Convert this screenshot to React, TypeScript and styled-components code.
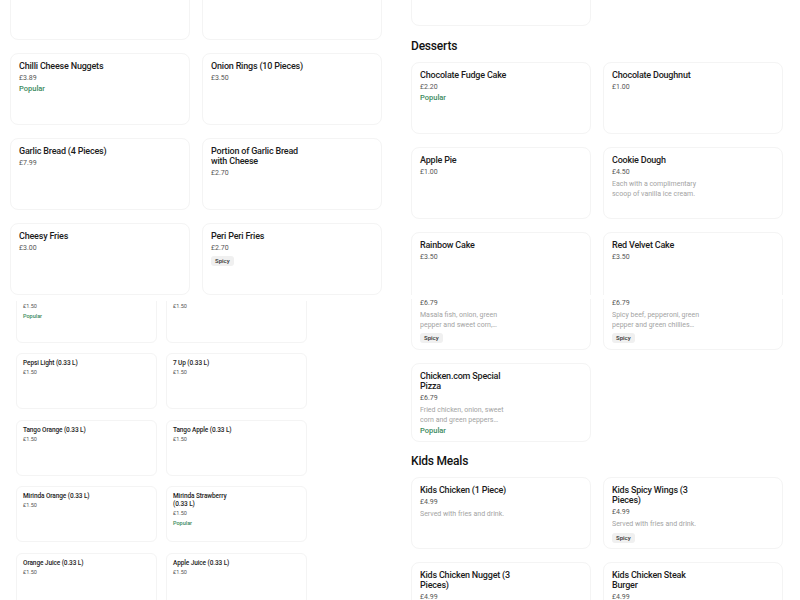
import React from 'react';
import styled, { createGlobalStyle } from 'styled-components';

interface Item {
    name: string;
    price: string;
    description?: string;
    popular?: boolean;
    spicy?: boolean;
}

const GlobalStyle = createGlobalStyle`
    html, body {
        margin: 0;
        padding: 0;
        background: #ffffff;
    }
    body {
        font-family: Roboto, "Noto Sans", "Liberation Sans", sans-serif;
        color: #1f1f1f;
        -webkit-font-smoothing: antialiased;
    }
`;

const Page = styled.div`
    width: 800px;
    height: 600px;
    overflow: hidden;
`;

const Band = styled.div<{ $height: number }>`
    display: grid;
    grid-template-columns: 400px 400px;
    height: ${(p) => p.$height}px;
    overflow: hidden;
`;

// a column of a band: it clips its own top edge, the list inside is pulled up
// so that only the lower part of its first row shows
const Column = styled.div<{ $left: number; $top: number; $shift: number }>`
    margin-top: ${(p) => p.$top}px;
    padding-left: ${(p) => p.$left}px;
    overflow: hidden;

    & > :first-child {
        margin-top: ${(p) => p.$shift}px;
    }
`;

const Inner = styled.div``;

const CardGrid = styled.div<{ $small?: boolean }>`
    display: grid;
    grid-template-columns: ${(p) => (p.$small ? '141px 141px' : '180px 180px')};
    column-gap: ${(p) => (p.$small ? 9 : 12)}px;
    row-gap: ${(p) => (p.$small ? 10.67 : 13)}px;
`;

const Card = styled.div<{ $small?: boolean }>`
    box-sizing: border-box;
    min-height: ${(p) => (p.$small ? 56 : 72)}px;
    padding: ${(p) => (p.$small ? '5px 6px 5px' : '7px 8px 5px')};
    border: 1px solid #f4f4f4;
    border-radius: ${(p) => (p.$small ? 6 : 8)}px;
    background: #ffffff;
    display: flex;
    flex-direction: column;
    align-items: flex-start;
`;

const Title = styled.div<{ $small?: boolean }>`
    max-width: ${(p) => (p.$small ? 68 : 95)}px;
    font-size: ${(p) => (p.$small ? 6.5 : 9)}px;
    line-height: ${(p) => (p.$small ? 8 : 10)}px;
    letter-spacing: ${(p) => (p.$small ? -0.1 : -0.2)}px;
    font-weight: 500;
    color: #1c1c1c;
`;

const Price = styled.div<{ $small?: boolean }>`
    margin-top: ${(p) => (p.$small ? 2 : 3)}px;
    font-size: ${(p) => (p.$small ? 5.5 : 7)}px;
    line-height: ${(p) => (p.$small ? 7 : 9)}px;
    color: #555555;
`;

const Description = styled.div`
    margin-top: 3px;
    max-width: 96px;
    font-size: 7px;
    line-height: 9.5px;
    color: #a3a3a3;
    display: -webkit-box;
    -webkit-line-clamp: 2;
    -webkit-box-orient: vertical;
    overflow: hidden;
`;

const Popular = styled.div<{ $small?: boolean }>`
    margin-top: ${(p) => (p.$small ? 2 : 1)}px;
    font-size: ${(p) => (p.$small ? 5.5 : 7.5)}px;
    line-height: ${(p) => (p.$small ? 8 : 10)}px;
    font-weight: 500;
    color: #3b8a5e;
`;

const Tag = styled.span`
    margin-top: 3px;
    padding: 0 4px;
    height: 10px;
    line-height: 10px;
    font-size: 6px;
    font-weight: 500;
    color: #333333;
    background: #f0f0f0;
    border-radius: 3px;
`;

const SectionTitle = styled.h2<{ $gap?: number }>`
    margin: ${(p) => p.$gap ?? 12}px 0 8px;
    font-size: 12px;
    line-height: 16px;
    font-weight: 500;
    color: #111111;
    letter-spacing: -0.2px;
`;

const sides: Item[] = [
    { name: 'Regular Fries', price: '£2.20' },
    { name: 'Large Fries', price: '£2.70' },
    { name: 'Chilli Cheese Nuggets', price: '£3.89', popular: true },
    { name: 'Onion Rings (10 Pieces)', price: '£3.50' },
    { name: 'Garlic Bread (4 Pieces)', price: '£7.99' },
    { name: 'Portion of Garlic Bread with Cheese', price: '£2.70' },
    { name: 'Cheesy Fries', price: '£3.00' },
    { name: 'Peri Peri Fries', price: '£2.70', spicy: true },
];

const drinks: Item[] = [
    { name: 'Pepsi (0.33 L)', price: '£1.50', popular: true },
    { name: 'Pepsi Max (0.33 L)', price: '£1.50' },
    { name: 'Pepsi Light (0.33 L)', price: '£1.50' },
    { name: '7 Up (0.33 L)', price: '£1.50' },
    { name: 'Tango Orange (0.33 L)', price: '£1.50' },
    { name: 'Tango Apple (0.33 L)', price: '£1.50' },
    { name: 'Mirinda Orange (0.33 L)', price: '£1.50' },
    { name: 'Mirinda Strawberry (0.33 L)', price: '£1.50', popular: true },
    { name: 'Orange Juice (0.33 L)', price: '£1.50' },
    { name: 'Apple Juice (0.33 L)', price: '£1.50' },
];

const desserts: Item[] = [
    { name: 'Chocolate Fudge Cake', price: '£2.20', popular: true },
    { name: 'Chocolate Doughnut', price: '£1.00' },
    { name: 'Apple Pie', price: '£1.00' },
    { name: 'Cookie Dough', price: '£4.50', description: 'Each with a complimentary scoop of vanilla ice cream.' },
    { name: 'Rainbow Cake', price: '£3.50' },
    { name: 'Red Velvet Cake', price: '£3.50' },
];

const pizzas: Item[] = [
    { name: 'Masala Fish Pizza', price: '£6.79', description: 'Masala fish, onion, green pepper and sweet corn, mozzarella cheese', spicy: true },
    { name: 'Hot Beef Pizza', price: '£6.79', description: 'Spicy beef, pepperoni, green pepper and green chillies topped with cheese', spicy: true },
    { name: 'Chicken.com Special Pizza', price: '£6.79', description: 'Fried chicken, onion, sweet corn and green peppers topped with cheese', popular: true },
];

const kids: Item[] = [
    { name: 'Kids Chicken (1 Piece)', price: '£4.99', description: 'Served with fries and drink.' },
    { name: 'Kids Spicy Wings (3 Pieces)', price: '£4.99', description: 'Served with fries and drink.', spicy: true },
    { name: 'Kids Chicken Nugget (3 Pieces)', price: '£4.99', description: 'Served with fries and drink.' },
    { name: 'Kids Chicken Steak Burger', price: '£4.99', description: 'Served with fries and drink.' },
];

const MenuCard: React.FC<{ item: Item; small?: boolean }> = ({ item, small }) => (
    <Card $small={small}>
        <Title $small={small}>{item.name}</Title>
        <Price $small={small}>{item.price}</Price>
        {item.description && <Description>{item.description}</Description>}
        {item.popular && <Popular $small={small}>Popular</Popular>}
        {item.spicy && <Tag>Spicy</Tag>}
    </Card>
);

const Grid: React.FC<{ items: Item[]; small?: boolean }> = ({ items, small }) => (
    <CardGrid $small={small}>
        {items.map((item) => (
            <MenuCard key={item.name} item={item} small={small} />
        ))}
    </CardGrid>
);

const App: React.FC = () => {
    return (
        <Page>
            <GlobalStyle />
            <Band $height={295}>
                <Column $left={10} $top={0} $shift={-32}>
                    <Grid items={sides} />
                </Column>
                <Column $left={11} $top={0} $shift={-46}>
                    <Inner>
                        <Grid items={[{ name: 'Large Chicken Box', price: '£8.99' }]} />
                        <SectionTitle>Desserts</SectionTitle>
                        <Grid items={desserts} />
                    </Inner>
                </Column>
            </Band>
            <Band $height={305}>
                <Column $left={16} $top={5.5} $shift={-14}>
                    <Grid items={drinks} small />
                </Column>
                <Column $left={11} $top={4} $shift={-21}>
                    <Inner>
                        <Grid items={pizzas} />
                        <SectionTitle $gap={11}>Kids Meals</SectionTitle>
                        <Grid items={kids} />
                    </Inner>
                </Column>
            </Band>
        </Page>
    );
};

export default App;
